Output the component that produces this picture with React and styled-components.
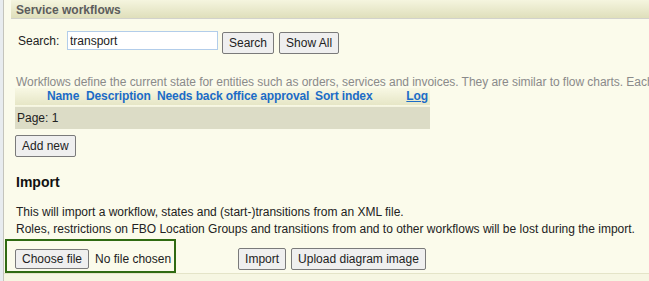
import React from 'react';
import styled, {createGlobalStyle} from 'styled-components';

const GlobalStyle = createGlobalStyle`
  html, body {
    margin: 0;
    padding: 0;
    background: #e8ecef;
    font-family: "Liberation Sans", Arial, sans-serif;
    font-size: 12px;
    color: #222;
  }
`;

const Frame = styled.div`
  margin-left: 3px;
  border-left: 1px solid #c4c4bc;
  background: #f6f6e2;
  height: 281px;
  overflow: hidden;
`;

const Panel = styled.div`
  background: #fbfbeb;
  height: 273px;
  border-bottom: 1px solid #e4e4c8;
`;

const PanelHeader = styled.div`
  margin-left: 7px;
  height: 18px;
  line-height: 20px;
  padding-left: 5px;
  background: linear-gradient(#f5f5df, #dfdfbb);
  border-bottom: 1px solid #d2d2cc;
  font-weight: bold;
  font-size: 12px;
  color: #5c5c5c;
`;

const Content = styled.div`
  padding: 0 0 0 11px;
`;

const SearchRow = styled.div`
  display: flex;
  align-items: flex-start;
  margin-top: 12px;
  height: 22px;
`;

const Label = styled.span`
  margin: 3px 0 0 3px;
  width: 49px;
`;

const TextInput = styled.input`
  box-sizing: border-box;
  width: 151px;
  height: 19px;
  margin: 0 4px 0 0;
  padding: 0 2px;
  border: 1px solid #b2cdea;
  background: #fff;
  font: inherit;
  color: #222;
  outline: none;
`;

const Button = styled.button`
  box-sizing: border-box;
  height: ${p => p.$h || 22}px;
  margin: ${p => p.$top || 0}px ${p => p.$gap ?? 5}px 0 0;
  padding: 0 6px;
  border: 1px solid #7a7a7a;
  border-radius: 2px;
  background: #efefef;
  font-family: "Liberation Sans", Arial, sans-serif;
  font-size: 12px;
  color: #222;
  white-space: nowrap;
`;

const Intro = styled.div`
  margin-top: 23px;
  margin-left: 1px;
  color: #8a8a8a;
  white-space: nowrap;
  line-height: 12px;
  letter-spacing: -0.04px;
`;

const Grid = styled.table`
  width: 415px;
  table-layout: fixed;
  border-collapse: collapse;
`;

const HeadRow = styled.tr`
  background: linear-gradient(#f8f8e4, #e6e6c6);
  height: 18px;
  border-bottom: 1px solid #f4f4e0;
`;

const HeadCell = styled.th`
  padding: 0 ${p => p.$align === 'right' ? 2 : 0}px 0 0;
  text-align: ${p => p.$align || 'left'};
  width: ${p => p.$w ? `${p.$w}px` : 'auto'};
  font-weight: bold;
  font-size: 12px;
  letter-spacing: -0.12px;
  color: #1c6cc7;
  line-height: 17px;
  white-space: nowrap;
  overflow: visible;
  a {
    color: inherit;
    text-decoration: underline;
  }
`;

const PagerRow = styled.tr`
  background: #dcdcc6;
  height: 23px;
`;

const PagerCell = styled.td`
  padding: 0 2px;
`;

const AddRow = styled.div`
  margin-top: 6px;
  height: 22px;
`;

const Heading = styled.h3`
  margin: 16px 0 0 1px;
  font-size: 14px;
  font-weight: bold;
  color: #111;
  line-height: 18px;
`;

const Note = styled.p`
  margin: 13px 0 0 1px;
  line-height: 17px;
  white-space: nowrap;
`;

const ImportRow = styled.div`
  display: flex;
  align-items: flex-start;
  margin-top: 10px;
`;

const FilePicker = styled.label`
  display: flex;
  align-items: center;
  margin: -9px 0 0 -10px;
  padding: 8px 3px 2px 8px;
  border: 2px solid #2f6a12;
`;

const FileState = styled.span`
  margin-left: 6px;
`;

const Spacer = styled.div`
  width: 62px;
`;

export default function App() {
    return (
        <>
            <GlobalStyle/>
            <Frame>
                <Panel>
                    <PanelHeader>Service workflows</PanelHeader>
                    <Content>
                        <SearchRow>
                            <Label>Search:</Label>
                            <TextInput defaultValue="transport"/>
                            <Button $top={1}>Search</Button>
                            <Button $top={1}>Show All</Button>
                        </SearchRow>
                        <Intro>
                            Workflows define the current state for entities such as orders, services and invoices. They are similar to flow charts. Each state can have transitions to other states.
                        </Intro>
                        <Grid>
                            <thead>
                            <HeadRow>
                                <HeadCell $w={32}/>
                                <HeadCell $w={39}>Name</HeadCell>
                                <HeadCell $w={71}>Description</HeadCell>
                                <HeadCell $w={158}>Needs back office approval</HeadCell>
                                <HeadCell $w={65}>Sort index</HeadCell>
                                <HeadCell $align="right"><a href="#log">Log</a></HeadCell>
                            </HeadRow>
                            </thead>
                            <tbody>
                            <PagerRow>
                                <PagerCell colSpan={6}>Page: 1</PagerCell>
                            </PagerRow>
                            </tbody>
                        </Grid>
                        <AddRow>
                            <Button>Add new</Button>
                        </AddRow>
                        <Heading>Import</Heading>
                        <Note>
                            This will import a workflow, states and (start-)transitions from an XML file.<br/>
                            Roles, restrictions on FBO Location Groups and transitions from and to other workflows will be lost during the import.
                        </Note>
                        <ImportRow>
                            <FilePicker>
                                <Button $h={20} $gap={0}>Choose file</Button>
                                <FileState>No file chosen</FileState>
                            </FilePicker>
                            <Spacer/>
                            <Button>Import</Button>
                            <Button $gap={0}>Upload diagram image</Button>
                        </ImportRow>
                    </Content>
                </Panel>
            </Frame>
        </>
    );
}
